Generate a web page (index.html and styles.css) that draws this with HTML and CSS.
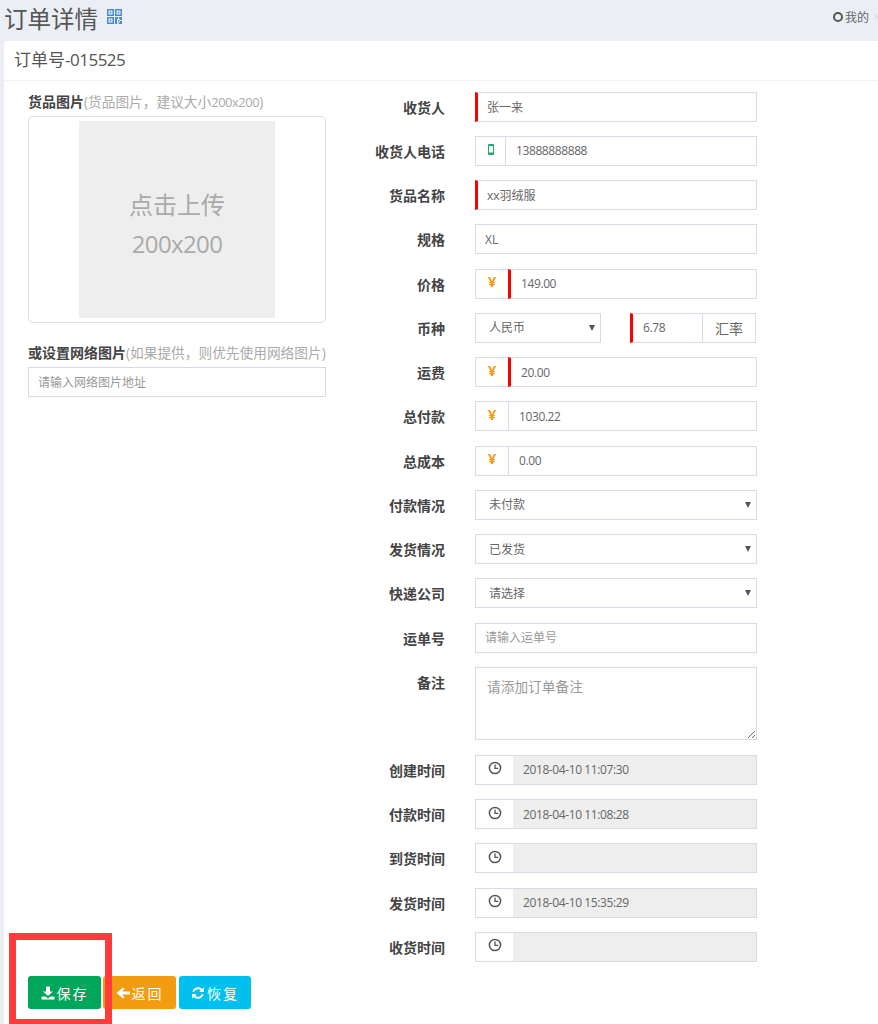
FILE: index.html
```html
<!DOCTYPE html>
<html lang="zh">
<head>
  <meta charset="UTF-8">
  <title>订单详情</title>
  <link rel="stylesheet" href="styles.css">
</head>
<body>

  <svg class="sprite">
    <symbol id="i-clock" viewBox="0 0 14 14">
      <circle cx="7" cy="7" r="5.6" fill="none" stroke="currentColor" stroke-width="1.5"/>
      <path d="M7 3.6V7.4H10.2" fill="none" stroke="currentColor" stroke-width="1.3"/>
    </symbol>
  </svg>

  <!-- Top bar -->
  <div class="topbar">
    <h1>订单详情</h1>
    <svg class="qr" viewBox="0 0 15 15">
      <path d="M0 0h7v7H0zM1.5 1.5v4h4v-4zM2.7 2.7h1.6v1.6H2.7zM8 0h7v7H8zM9.5 1.5v4h4v-4zM10.7 2.7h1.6v1.6h-1.6zM0 8h7v7H0zM1.5 9.5v4h4v-4zM2.7 10.7h1.6v1.6H2.7zM8 8h3v2H10v5H8zM12 8h3v3h-2V10h-1zM11 11h1.5v1.5H11zM13 12h2v3h-3.500v-1.500H13z" fill="#4a8ccf" fill-rule="evenodd"/>
    </svg>
    <div class="user">
      <span class="user-dot"></span>
      <span>我的</span>
      <svg class="user-more" viewBox="0 0 3 6"><path d="M0 0.500 2.500 3 0 5.500" fill="none" stroke="#ccc"/></svg>
    </div>
  </div>

  <!-- Order card -->
  <div class="card">
    <div class="card-title">订单号<span class="title-num">-015525</span></div>
    <div class="card-body">

      <div class="left-col">
        <div class="field-label"><b>货品图片</b><span>(货品图片，建议大小<span class="narrow">200x200</span>)</span></div>
        <div class="upload-box">
          <div class="upload-inner">
            <div>点击上传</div>
            <div class="upload-size">200x200</div>
          </div>
        </div>
        <div class="field-label net-label"><b>或设置网络图片</b><span>(如果提供，则优先使用网络图片)</span></div>
        <input class="input net-input" type="text" placeholder="请输入网络图片地址">
      </div>

      <div class="right-col">
        <div class="row">
          <label>收货人</label>
          <div class="group"><input class="input required" type="text" value="张一来"></div>
        </div>
        <div class="row">
          <label>收货人电话</label>
          <div class="group">
            <span class="addon addon-phone">
              <svg class="phone" viewBox="0 0 6 11"><path d="M1 0h4a1 1 0 0 1 1 1v9a1 1 0 0 1-1 1H1a1 1 0 0 1-1-1V1a1 1 0 0 1 1-1zM1 2v6.500h4V2z" fill="#1fa866" fill-rule="evenodd"/></svg>
            </span>
            <input class="input num" type="text" value="13888888888">
          </div>
        </div>
        <div class="row">
          <label>货品名称</label>
          <div class="group"><input class="input required" type="text" value="xx羽绒服"></div>
        </div>
        <div class="row">
          <label>规格</label>
          <div class="group"><input class="input" type="text" value="XL"></div>
        </div>
        <div class="row">
          <label>价格</label>
          <div class="group">
            <span class="addon addon-yen">¥</span>
            <input class="input required num" type="text" value="149.00">
          </div>
        </div>
        <div class="row">
          <label>币种</label>
          <div class="group group-split">
            <div class="select-wrap select-small">
              <select class="input select"><option>人民币</option></select>
            </div>
            <div class="rate">
              <input class="input required num" type="text" value="6.78">
              <span class="addon addon-rate">汇率</span>
            </div>
          </div>
        </div>
        <div class="row">
          <label>运费</label>
          <div class="group">
            <span class="addon addon-yen">¥</span>
            <input class="input required num" type="text" value="20.00">
          </div>
        </div>
        <div class="row">
          <label>总付款</label>
          <div class="group">
            <span class="addon addon-yen">¥</span>
            <input class="input num" type="text" value="1030.22">
          </div>
        </div>
        <div class="row">
          <label>总成本</label>
          <div class="group">
            <span class="addon addon-yen">¥</span>
            <input class="input num" type="text" value="0.00">
          </div>
        </div>
        <div class="row">
          <label>付款情况</label>
          <div class="group select-wrap"><select class="input select"><option>未付款</option></select></div>
        </div>
        <div class="row">
          <label>发货情况</label>
          <div class="group select-wrap"><select class="input select"><option>已发货</option></select></div>
        </div>
        <div class="row">
          <label>快递公司</label>
          <div class="group select-wrap"><select class="input select"><option>请选择</option></select></div>
        </div>
        <div class="row">
          <label>运单号</label>
          <div class="group"><input class="input" type="text" placeholder="请输入运单号"></div>
        </div>
        <div class="row row-note">
          <label>备注</label>
          <div class="group"><textarea class="input note" placeholder="请添加订单备注"></textarea></div>
        </div>
        <div class="row">
          <label>创建时间</label>
          <div class="group">
            <span class="addon addon-clock"><svg class="clock"><use href="#i-clock"/></svg></span>
            <input class="input num time" type="text" value="2018-04-10 11:07:30" disabled>
          </div>
        </div>
        <div class="row">
          <label>付款时间</label>
          <div class="group">
            <span class="addon addon-clock"><svg class="clock"><use href="#i-clock"/></svg></span>
            <input class="input num time" type="text" value="2018-04-10 11:08:28" disabled>
          </div>
        </div>
        <div class="row">
          <label>到货时间</label>
          <div class="group">
            <span class="addon addon-clock"><svg class="clock"><use href="#i-clock"/></svg></span>
            <input class="input num time" type="text" disabled>
          </div>
        </div>
        <div class="row">
          <label>发货时间</label>
          <div class="group">
            <span class="addon addon-clock"><svg class="clock"><use href="#i-clock"/></svg></span>
            <input class="input num time" type="text" value="2018-04-10 15:35:29" disabled>
          </div>
        </div>
        <div class="row">
          <label>收货时间</label>
          <div class="group">
            <span class="addon addon-clock"><svg class="clock"><use href="#i-clock"/></svg></span>
            <input class="input num time" type="text" disabled>
          </div>
        </div>
      </div>
    </div>

    <div class="actions">
      <button class="btn btn-save">
        <svg viewBox="0 0 14 14"><path d="M5 0.500H9V5.500H12L7 10 2 5.500H5zM0.500 10.500H4.500L7 12.500 9.500 10.500H13.500V13.500H0.500z" fill="#fff"/></svg>保存
      </button>
      <button class="btn btn-back">
        <svg viewBox="0 0 14 14"><path d="M7 1.500 8.600 3.100 6 5.500H14V8.500H6L8.600 10.900 7 12.500 0.500 7z" fill="#fff"/></svg>返回
      </button>
      <button class="btn btn-reset">
        <svg viewBox="0 0 14 14"><path d="M1.300 5.800C2 3 4.300 1.200 7 1.200c1.700 0 3.100.7 4.200 1.700L13 1.200V6H8.300l1.600-1.700C9.200 3.600 8.200 3.200 7 3.200 5.300 3.200 3.900 4.300 3.400 5.800zM12.700 8.200C12 11 9.700 12.800 7 12.800c-1.700 0-3.100-.7-4.200-1.700L1 12.800V8h4.700l-1.600 1.700c.7.700 1.700 1.100 2.900 1.100 1.700 0 3.100-1.100 3.600-2.600z" fill="#fff"/></svg>恢复
      </button>
    </div>
  </div>

  <!-- Red highlight frame drawn over the screenshot -->
  <div class="highlight"></div>

</body>
</html>
```

FILE: styles.css
```css
* {
  box-sizing: border-box;
}
html, body {
  height: 100%;
}
body {
  margin: 0;
  position: relative;
  overflow: hidden;
  background-color: #ebeef4;
  color: #555;
  font-family: "Open Sans", "Noto Sans CJK SC", sans-serif;
  font-size: 12px;
}
.sprite {
  display: none;
}

/* top bar */
.topbar {
  height: 41px;
  display: flex;
  align-items: center;
  padding-left: 4px;
}
.topbar h1 {
  margin: -4px 9px 0 0;
  font-size: 23.500px;
  font-weight: 400;
  line-height: 30px;
  color: #555;
}
.qr {
  width: 15px;
  height: 15px;
  margin-top: -9px;
}
.user {
  margin-left: auto;
  margin-top: -8px;
  display: flex;
  align-items: center;
  font-size: 12px;
  color: #666;
}
.user-dot {
  width: 10px;
  height: 10px;
  border: 2px solid #555;
  border-radius: 50%;
  margin-right: 2px;
}
.user-more {
  width: 3px;
  height: 6px;
  margin-left: 6px;
}

/* card */
.card {
  margin-left: 4px;
  height: calc(100vh - 41px);
  background: #fff;
  border-radius: 3px 0 0 0;
}
.card-title {
  height: 40px;
  padding-left: 10px;
  font-size: 17px;
  line-height: 38px;
  color: #555;
  border-bottom: 1px solid #f3f3f3;
}
.title-num {
  letter-spacing: -0.500px;
}
.card-body {
  display: flex;
  padding: 10.500px 0 0 24px;
}

/* left column */
.left-col {
  width: 298px;
  padding-top: 0.500px;
}
.field-label {
  height: 24px;
  font-size: 13.700px;
  line-height: 20px;
  white-space: nowrap;
  color: #aaa;
}
.field-label b {
  font-size: 14px;
  color: #444;
}
.narrow {
  font-size: 13px;
  letter-spacing: -0.500px;
}
.upload-box {
  height: 207px;
  border: 1px solid #ddd;
  border-radius: 5px;
  padding: 4px 0 0 50px;
}
.upload-inner {
  width: 196px;
  height: 197px;
  padding-top: 8px;
  background: #eee;
  display: flex;
  flex-direction: column;
  align-items: center;
  justify-content: center;
  font-size: 24px;
  line-height: 39px;
  color: #aaa;
}
.upload-size {
  letter-spacing: -0.600px;
}
.net-label {
  margin-top: 20px;
}

/* right column */
.right-col {
  margin-left: 19px;
}
.row {
  display: flex;
  margin-bottom: 14.250px;
}
.row label {
  width: 100px;
  height: 30px;
  margin-right: 30px;
  text-align: right;
  font-size: 14px;
  font-weight: 700;
  line-height: 32px;
  color: #444;
}
.row-note {
  margin-bottom: 15px;
}
.group {
  display: flex;
  width: 282px;
  height: 30px;
}
.row-note .group {
  height: 73px;
}
.group-split {
  justify-content: space-between;
}

.input {
  flex: 1;
  min-width: 0;
  height: 100%;
  padding: 0 9px;
  border: 1px solid #d8dbe6;
  border-radius: 0;
  outline: none;
  background: #fff;
  color: #666;
  font-family: inherit;
  font-size: 12px;
}
.input::placeholder {
  color: #999;
  opacity: 1;
}
.net-input {
  display: block;
  width: 298px;
  height: 30px;
}
.required {
  border-left: 3px solid #f00;
}
.num {
  padding-left: 10px;
  letter-spacing: -0.400px;
}
.time {
  background: #eee;
  color: #666;
  border-left: none;
}
.note {
  width: 100%;
  padding: 8px 11px;
  font-size: 14px;
}
.note::placeholder {
  font-size: 13.700px;
}

.addon {
  display: flex;
  align-items: center;
  justify-content: center;
  flex: none;
  border: 1px solid #d8dbe6;
  border-right: none;
  background: #fff;
}
.addon-phone {
  width: 30px;
}
.phone {
  width: 6px;
  height: 11px;
  margin-top: -2px;
}
.addon-yen {
  width: 33px;
  padding-bottom: 5px;
  color: #f39c12;
  font-size: 15px;
  font-weight: 700;
}
.addon-clock {
  width: 38px;
  padding-bottom: 3px;
  color: #555;
}
.clock {
  width: 14px;
  height: 14px;
}

/* selects */
.select-wrap {
  position: relative;
}
.select-wrap::after {
  content: "";
  position: absolute;
  top: 12px;
  right: 6px;
  border-left: 3px solid transparent;
  border-right: 3px solid transparent;
  border-top: 6px solid #555;
  pointer-events: none;
}
.select {
  display: block;
  width: 100%;
  padding-left: 13px;
  appearance: none;
  -webkit-appearance: none;
}
.select-small {
  width: 126px;
}
.rate {
  display: flex;
  width: 126px;
  height: 30px;
  margin-right: 1px;
}
.addon-rate {
  width: 53px;
  border-left: none;
  border-right: 1px solid #d8dbe6;
  color: #666;
  font-size: 14px;
}
.rate .input {
  border-right: 1px solid #d8dbe6;
}

/* bottom buttons */
.actions {
  display: flex;
  padding-left: 24px;
  gap: 2px;
}
.btn {
  display: flex;
  align-items: center;
  justify-content: center;
  width: 73px;
  height: 33px;
  padding: 0;
  border: none;
  border-radius: 3px;
  color: #fff;
  font-family: inherit;
  font-size: 14px;
  letter-spacing: 2px;
}
.btn svg {
  width: 14px;
  height: 14px;
  margin-right: 2px;
}
.btn-save {
  background-color: #00a65a;
}
.btn-back {
  background-color: #f39c12;
}
.btn-reset {
  margin-left: 1px;
  width: 72px;
  background-color: #00c0ef;
}

/* annotation */
.highlight {
  position: absolute;
  left: 9px;
  top: 933px;
  width: 103px;
  height: 91px;
  border: 7px solid #ff3b3b;
  border-bottom-width: 5px;
}
```
